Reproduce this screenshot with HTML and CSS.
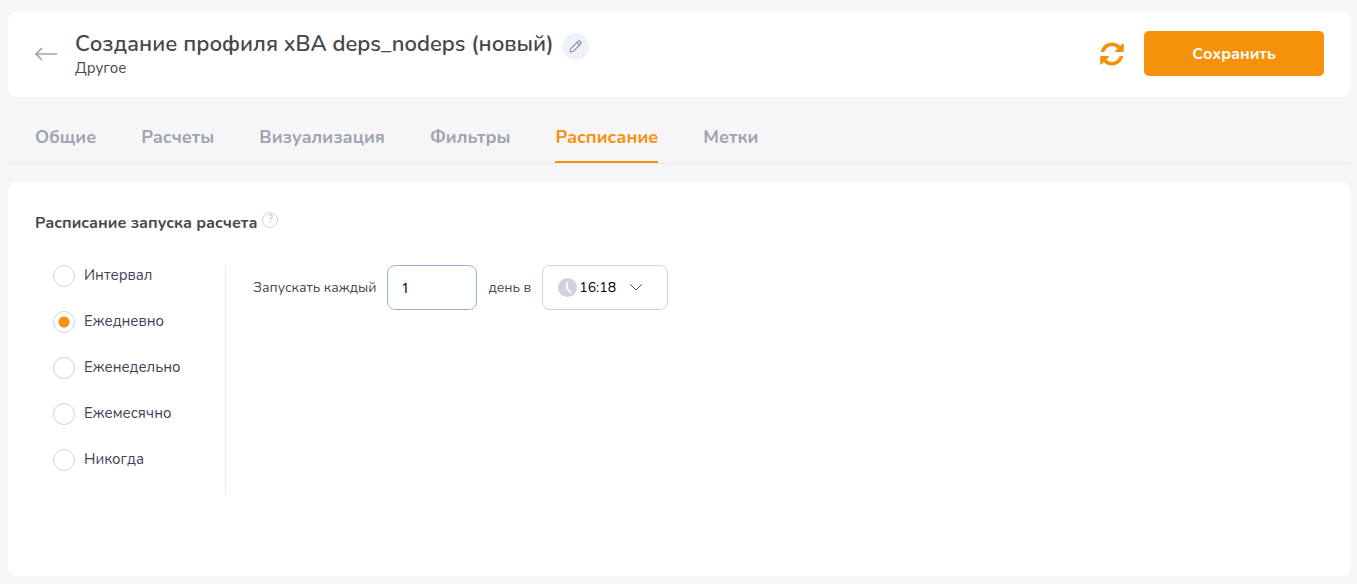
FILE: index.html
```html
<!DOCTYPE html>
<html lang="ru">
<head>
    <meta charset="UTF-8">
    <meta name="viewport" content="width=device-width, initial-scale=1.0">
    <title>Создание профиля</title>
    <link rel="stylesheet" href="styles.css">
</head>
<body>
    <header class="header">
        <a href="#" class="back" aria-label="Назад">
            <svg width="22" height="14" viewBox="0 0 22 14" fill="none" stroke="#9ea4b0" stroke-width="1.6">
                <path d="M22 7H1M7 1L1 7l6 6"/>
            </svg>
        </a>
        <div class="heading">
            <div class="title-row">
                <h1>Создание профиля xBA deps_nodeps (новый)</h1>
                <button type="button" class="edit" aria-label="Переименовать">
                    <svg width="13" height="13" viewBox="0 0 13 13" fill="none" stroke="#8d94a5" stroke-width="1.2" stroke-linejoin="round">
                        <path d="M1 12l.6-3.200 7.400-7.400a1.500 1.500 0 0 1 2.200 0l.4.4a1.500 1.500 0 0 1 0 2.200L4.200 11.400 1 12zM8 2.400L10.600 5"/>
                    </svg>
                </button>
            </div>
            <p class="subtitle">Другое</p>
        </div>
        <button type="button" class="refresh" aria-label="Обновить">
            <svg width="24" height="24" viewBox="0 0 24 24">
                <path fill="#f6910b" d="M.8 10A11.400 11.400 0 0 1 20.200 4L22.400 1.800Q23.600 1 23.800 2.300V9.200Q23.800 10 23 10H15.800Q14.600 9.700 15.300 8.800L17.500 6.600A7.600 7.600 0 0 0 4.700 9.200Q4.500 10 3.700 10Z"/>
                <path fill="#f6910b" transform="rotate(180 12 12)" d="M.8 10A11.400 11.400 0 0 1 20.200 4L22.400 1.800Q23.600 1 23.800 2.300V9.200Q23.800 10 23 10H15.800Q14.600 9.700 15.300 8.800L17.500 6.600A7.600 7.600 0 0 0 4.700 9.200Q4.500 10 3.700 10Z"/>
            </svg>
        </button>
        <button type="submit" form="schedule" class="save">Сохранить</button>
    </header>

    <nav class="tabs">
        <a href="#">Общие</a>
        <a href="#">Расчеты</a>
        <a href="#">Визуализация</a>
        <a href="#">Фильтры</a>
        <a href="#" class="active" aria-current="page">Расписание</a>
        <a href="#">Метки</a>
    </nav>

    <main class="panel">
        <div class="panel-title">
            <h2 id="schedule-title">Расписание запуска расчета</h2>
            <button type="button" class="help" aria-label="Справка">?</button>
        </div>

        <form id="schedule" class="schedule">
            <div class="modes" role="radiogroup" aria-labelledby="schedule-title">
                <label><input type="radio" name="mode"><span>Интервал</span></label>
                <label><input type="radio" name="mode" checked><span>Ежедневно</span></label>
                <label><input type="radio" name="mode"><span>Еженедельно</span></label>
                <label><input type="radio" name="mode"><span>Ежемесячно</span></label>
                <label><input type="radio" name="mode"><span>Никогда</span></label>
            </div>

            <div class="daily">
                <label for="days">Запускать каждый</label>
                <input type="text" id="days" class="days" value="1" inputmode="numeric">
                <label for="time">день в</label>
                <div class="time">
                    <svg width="19" height="19" viewBox="0 0 19 19" fill="none">
                        <circle cx="9.5" cy="9.5" r="9.5" fill="#ced4d9"/>
                        <path d="M9 4v6l4 5" stroke="#fff" stroke-width="1.7"/>
                    </svg>
                    <select id="time">
                        <option>16:18</option>
                    </select>
                    <svg width="12" height="7" viewBox="0 0 12 7" fill="none" stroke="#4b5268">
                        <path d="M.5.5L6 6l5.500-5.500"/>
                    </svg>
                </div>
            </div>
        </form>
    </main>
</body>
</html>
```
FILE: styles.css
```css
* {
    box-sizing: border-box;
}

body {
    margin: 0;
    padding: 11px 6px 8px 8px;
    min-height: 100vh;
    display: flex;
    flex-direction: column;
    background: #f6f6f9;
    color: #484848;
    font-family: Nunito, "Open Sans", sans-serif;
    font-size: 14px;
}

h1, h2, p {
    margin: 0;
}

button {
    padding: 0;
    border: none;
    background: none;
    font-family: inherit;
    cursor: pointer;
}

svg {
    display: block;
    flex: none;
}

.header {
    display: flex;
    align-items: center;
    min-height: 86px;
    padding: 0 27px;
    background: #fff;
    border-radius: 10px;
}

.heading {
    flex: 1;
    margin-left: 18px;
    padding-bottom: 2px;
}

.title-row {
    display: flex;
    align-items: flex-end;
    gap: 8px;
}

h1 {
    font-size: 22px;
    font-weight: 600;
    line-height: 28px;
    padding-bottom: 2px;
}

.edit {
    display: flex;
    align-items: center;
    justify-content: center;
    width: 27px;
    height: 27px;
    border-radius: 50%;
    background: #eff2f8;
}

.subtitle {
    font-size: 15px;
    line-height: 16px;
}

.save {
    width: 180px;
    height: 45px;
    margin: 0 0 1px 20px;
    border-radius: 5px;
    background: #f6910b;
    color: #fff;
    font-size: 16px;
    font-weight: 700;
}

.tabs {
    display: flex;
    gap: 45px;
    height: 67px;
    padding: 0 27px;
    border-bottom: 1px solid #e9e9ec;
}

.tabs a {
    padding-top: 28px;
    border-bottom: 2px solid transparent;
    color: #9ea4b0;
    font-size: 18px;
    font-weight: 700;
    line-height: 24px;
    text-decoration: none;
}

.tabs .active {
    border-color: #f6910b;
    color: #f6910b;
}

.panel {
    flex: 1;
    margin-top: 18px;
    padding: 30px 27px;
    background: #fff;
    border-radius: 10px;
}

.panel-title {
    display: flex;
    gap: 5px;
}

h2 {
    font-size: 16px;
    font-weight: 700;
    line-height: 22px;
}

.help {
    width: 16px;
    height: 16px;
    border: 1px solid #d3d7db;
    border-radius: 50%;
    color: #c5cace;
    font-size: 11px;
    font-weight: 600;
    line-height: 14px;
}

.schedule {
    display: flex;
    align-items: flex-start;
    margin-top: 31px;
}

.modes {
    width: 191px;
    padding-left: 18px;
    border-right: 1px solid #ebebee;
}

.modes label {
    display: flex;
    gap: 9px;
    height: 46px;
    color: #3f4254;
    font-size: 15px;
    line-height: 20px;
}

.modes input {
    appearance: none;
    flex: none;
    width: 22px;
    height: 22px;
    margin: 0;
    border: 1px solid #c9d3e6;
    border-radius: 50%;
}

.modes input:checked {
    background: radial-gradient(circle, #f6910b 5px, transparent 6px);
}

.daily {
    display: flex;
    align-items: center;
    gap: 11px;
    padding-left: 27px;
}

.days,
.time {
    height: 45px;
    border: 1px solid #c9d3e6;
    border-radius: 8px;
    background: #fff;
}

.days {
    width: 90px;
    padding: 0 13px;
    border-color: #9cb0d3;
    color: #000;
    font-family: "Noto Sans", sans-serif;
    font-size: 14px;
}

.time {
    display: flex;
    align-items: center;
    width: 126px;
    padding-left: 15px;
}

.time select {
    appearance: none;
    width: 53px;
    padding: 0 0 0 2px;
    border: none;
    background: none;
    color: #000;
    font-family: inherit;
    font-size: 14px;
}
```
